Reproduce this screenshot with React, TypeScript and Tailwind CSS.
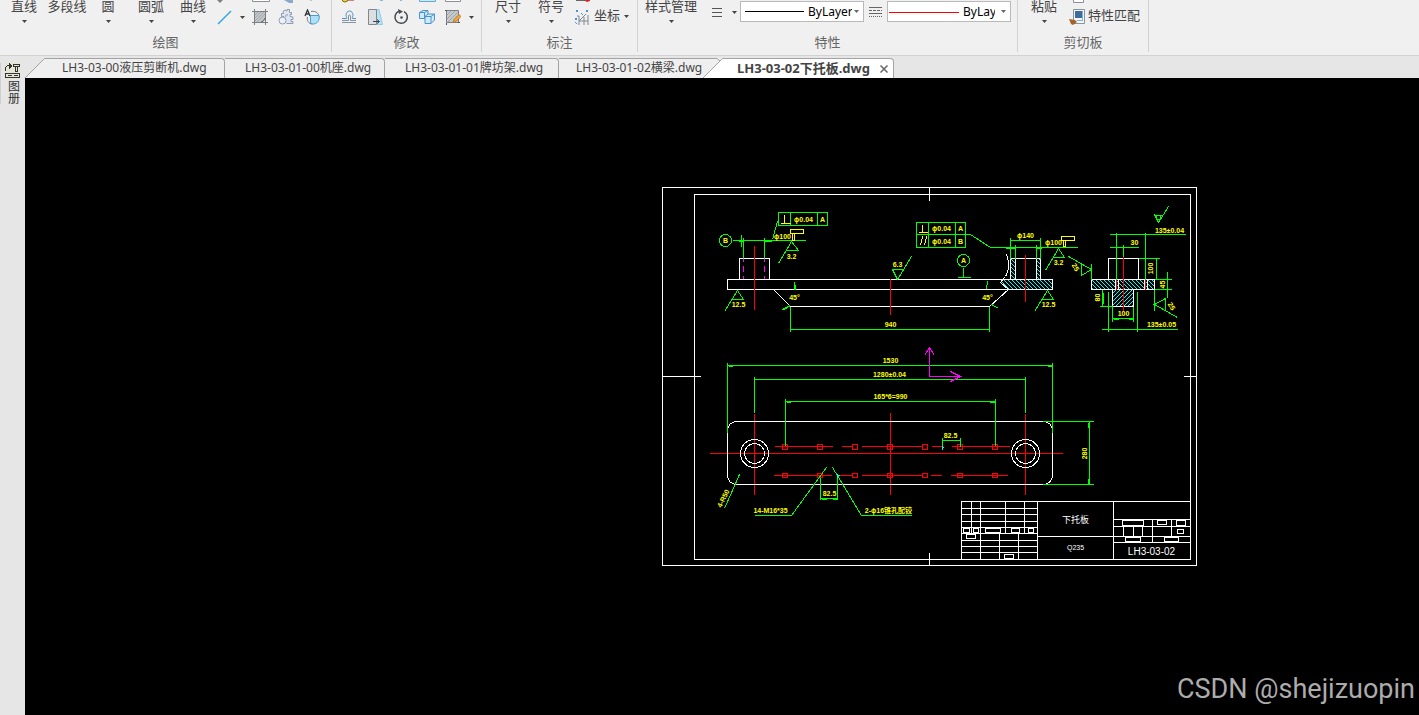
import type { ReactNode } from 'react'
import { clsx } from 'clsx'

// --- Icons ---

const Caret = ({ className }: { className?: string }) => (
  <svg width="5" height="3" viewBox="0 0 5 3" className={clsx('shrink-0', className)} aria-hidden="true">
    <path d="M0 0h5L2.5 3z" fill="currentColor" />
  </svg>
)

const Icon = ({ children }: { children: ReactNode }) => (
  <svg width="16" height="16" viewBox="0 0 16 16" fill="none" stroke="#7d8792" className="shrink-0" aria-hidden="true">
    {children}
  </svg>
)

const LineIcon = () => (
  <Icon>
    <path d="M2 15 15 2" stroke="#2ea3dc" strokeWidth="1.4" />
  </Icon>
)

const HatchIcon = () => (
  <Icon>
    <path d="M2.5 2.5h11v6l-4 5h-7z" fill="#c3c7ca" />
    <path d="M3 6l3-3M3 9l6-6M3 12l9-9M5 13l8-8" stroke="#a5a9ad" />
    <path d="M2.5 0v16M0 2.5h16M13.5 0v16M0 13.5h16" stroke="#7b7f84" />
    <path d="M13 9c0 2-2 4-4 4" stroke="#5d6266" />
  </Icon>
)

const GearIcon = () => (
  <Icon>
    <path
      d="M3.5 7.5V4.5h2L5 2.500 7 1l2 1V.5h2.500v3h2v2h-1.500v2l3 .5v2.500h-2v2h2v2H8.500"
      fill="#dfe5ee"
      stroke="#8d9cb4"
    />
    <path d="M3.5 7.5h2.500M10 6c-2-1-3 1-2 2" stroke="#8d9cb4" />
    <circle cx="4.5" cy="11.5" r="3.5" fill="#eef1f5" stroke="#8d9cb4" />
  </Icon>
)

const BoundaryIcon = () => (
  <Icon>
    <path d="M7 2.5c5-1 8 2 8 6M3.5 8c-1 3 1 7 5 7" stroke="#6f7880" />
    <path d="M6.500 6.500H15c1 5-2 8.500-6 8.500-2 0-2.500-1-2.500-3z" fill="#aee0fa" stroke="#4b9ed0" />
    <path d="M1 7 3.500 1 6 7M2 5h3" stroke="#2f3438" strokeWidth="1.3" />
  </Icon>
)

const OffsetIcon = () => (
  <Icon>
    <path d="M1 9.500h4.500c1 0 0-1-.5-3 0-6 7-6 7 0-.5 2-1.500 3 0 3H15" stroke="#4a93c8" />
    <path d="M1 13.500h14M1 11.500h6.500V7c0-1.500 2-1.500 2 0v4.500H15" stroke="#8795a3" />
  </Icon>
)

const StretchIcon = () => (
  <Icon>
    <path d="M8 .5h4l3.500 15H8z" fill="#b6e2f8" stroke="#8fcbea" />
    <path d="M1.500 .5h8v15h-8z" fill="#dcdfe1" stroke="#80868c" />
    <path d="M6 12.500h6M10 10.500l2.500 2-2.500 2" stroke="#3b4045" />
  </Icon>
)

const RotateIcon = () => (
  <Icon>
    <path d="M6 2.300A6.200 6.200 0 1 0 11 2.600" stroke="#474c51" strokeWidth="1.5" />
    <path d="M5 0l5 2.500L6 5z" fill="#474c51" stroke="none" />
    <circle cx="8.5" cy="8.5" r="1.300" fill="#474c51" stroke="none" />
  </Icon>
)

const BlocksIcon = () => (
  <Icon>
    <path d="M.5 3.500 4 1.500h5v6l-3 2H.5zM.5 3.500h5v6M5.500 3.500l3.500-2" fill="#cfeafb" stroke="#4a93c8" />
    <path d="M6 7.500 9 5h6.500v6L12 14.500H6zM6 7.500h6v7M12 7.500 15.500 5" fill="#cfeafb" stroke="#4a93c8" />
  </Icon>
)

const EditHatchIcon = () => (
  <Icon>
    <path d="M1.500 1.500h12v12h-12z" fill="#c6c9cc" stroke="#7b7f84" />
    <path d="M2 6l4-4M2 10l8-8M3 13 13 3" stroke="#a1a5a9" />
    <path d="M14 5.500 9 10.500l-1 3 3-1 5-5z" fill="#f0a742" stroke="#b97b22" />
    <path d="M0 1.500h2M13 13.500h2M1.500 14v2" stroke="#4e5358" />
  </Icon>
)

const OrdinateIcon = () => (
  <Icon>
    <path d="M3 7h2v9M5 12h9M5 12l7-7M10 8v8M14 6v10" stroke="#7f8890" />
    <path d="M2 1l2 2M4 1 2 3M12 1l2 2M14 1l-2 2M1 9l2 2M3 9l-2 2M1 13l2 2M7 4l2 2" stroke="#4a93d8" />
  </Icon>
)

const MatchIcon = () => (
  <Icon>
    <path d="M4.500 .5h11v14h-11z" fill="#f4f6f8" stroke="#8b939a" />
    <path d="M6 2h7v7H6z" fill="#3f6c9f" stroke="none" />
    <path d="M13.500 2v9M8 11.500h6" stroke="#7fb0dc" />
    <path d="M0 10l6 1 2 2-4 3-2-1z" fill="#a7622b" stroke="none" />
  </Icon>
)

// --- Ribbon ---

interface RibbonPanelProps {
  title: string
  className: string
  children: ReactNode
}

const RibbonPanel = ({ title, className, children }: RibbonPanelProps) => (
  <section className={clsx('flex h-[52px] shrink-0 flex-col border-r border-[#d2d2d2]', className)}>
    <div className="flex h-8 items-start">{children}</div>
    <h2 className="text-center text-[13px] leading-5 text-[#666]">{title}</h2>
  </section>
)

interface BigButtonProps {
  label: string
  className: string
  menu?: boolean
}

const BigButton = ({ label, className, menu = true }: BigButtonProps) => (
  <button className={clsx('flex shrink-0 flex-col items-center gap-2 whitespace-nowrap', className)}>
    <span className="text-[13px] leading-3">{label}</span>
    {menu && <Caret />}
  </button>
)

const IconButton = ({ label, children }: { label: string; children: ReactNode }) => (
  <button aria-label={label} className="flex size-4 shrink-0">
    {children}
  </button>
)

const MenuButton = ({ label, className }: { label: string; className: string }) => (
  <button aria-label={label} className={clsx('flex h-4 items-center justify-center', className)}>
    <Caret />
  </button>
)

// lower edges of the tool row that is scrolled out above the window
const ClippedTools = ({ children }: { children?: ReactNode }) => (
  <svg height="4" className="mb-[5px] w-full shrink-0" aria-hidden="true">
    {children}
  </svg>
)

interface LayerSelectProps {
  label: string
  color: string
  lineClass: string
  selectClass: string
}

const LayerSelect = ({ label, color, lineClass, selectClass }: LayerSelectProps) => (
  <div className="mt-px flex h-[21px] w-[124px] shrink-0 items-center border border-[#b9b9b9] bg-white text-black">
    <svg height="1" className={clsx('shrink-0', lineClass)} aria-hidden="true">
      <rect width="100%" height="1" fill={color} />
    </svg>
    <select
      aria-label={label}
      className={clsx('ml-1 shrink-0 appearance-none overflow-hidden bg-transparent text-[12px] leading-4', selectClass)}
    >
      <option>ByLayer</option>
    </select>
    <Caret className="mr-1 ml-auto text-[#666]" />
  </div>
)

const Ribbon = () => (
  <header className="flex h-14 overflow-hidden border-b border-[#d2d2d2] bg-[#f0f0f0]">
    <RibbonPanel title="绘图" className="w-[332px]">
      <BigButton label="直线" className="w-12" />
      <BigButton label="多段线" className="w-[38px]" menu={false} />
      <BigButton label="圆" className="w-11" />
      <BigButton label="圆弧" className="w-[42px]" />
      <BigButton label="曲线" className="w-[42px]" />
      <div className="flex flex-1 flex-col">
        <ClippedTools>
          <path d="M3 0l3 3 3-3z" fill="#7d8186" />
          <path d="M38.5 0v1.5h17V0" fill="#fff" stroke="#8b9096" />
          <path d="M70 0h9v3h-4z" fill="#8ea7cc" />
          <path d="M97 0v1" stroke="#999" />
        </ClippedTools>
        <div className="flex pl-[2px]">
          <IconButton label="构造线"><LineIcon /></IconButton>
          <MenuButton label="构造线选项" className="w-5" />
          <div className="flex gap-[10px]">
            <IconButton label="填充"><HatchIcon /></IconButton>
            <IconButton label="齿轮"><GearIcon /></IconButton>
            <IconButton label="边界"><BoundaryIcon /></IconButton>
          </div>
        </div>
      </div>
    </RibbonPanel>

    <RibbonPanel title="修改" className="w-[150px]">
      <div className="flex flex-1 flex-col">
        <ClippedTools>
          <circle cx="13" cy="-1" r="3" fill="#f2cf1d" stroke="#7d6d1d" />
          <path d="M16 0h6v1h-6z" fill="#c98480" />
          <path d="M48 0h3v1h-3zM68 0h2v1h-2z" fill="#8fb4d4" />
          <path d="M87.5 0v1.5h16V0" fill="#cbe9fb" stroke="#62a8d8" />
          <path d="M113.5 0v1.5h15V0" fill="#fff" stroke="#8b9096" />
        </ClippedTools>
        <div className="flex pl-[9px]">
          <div className="flex gap-[10px]">
            <IconButton label="偏移"><OffsetIcon /></IconButton>
            <IconButton label="拉伸"><StretchIcon /></IconButton>
            <IconButton label="旋转"><RotateIcon /></IconButton>
            <IconButton label="阵列"><BlocksIcon /></IconButton>
            <IconButton label="编辑填充"><EditHatchIcon /></IconButton>
          </div>
          <MenuButton label="编辑填充选项" className="w-5" />
        </div>
      </div>
    </RibbonPanel>

    <RibbonPanel title="标注" className="w-[156px]">
      <BigButton label="尺寸" className="ml-1 w-11" />
      <BigButton label="符号" className="w-[42px]" />
      <div className="flex flex-1 flex-col pl-[2px]">
        <ClippedTools>
          <path d="M2 .5h11" stroke="#666" />
          <path d="M10 0h6v1l-3 1z" fill="#d22" />
        </ClippedTools>
        <button className="flex items-start gap-1 whitespace-nowrap text-[13px]">
          <OrdinateIcon />
          <span className="leading-3">坐标</span>
          <Caret className="mt-[6px]" />
        </button>
      </div>
    </RibbonPanel>

    <RibbonPanel title="特性" className="w-[380px]">
      <BigButton label="样式管理" className="w-[66px]" />
      <button aria-label="线宽" className="ml-2 flex h-6 items-center gap-[10px]">
        <svg width="10" height="9" viewBox="0 0 10 9" aria-hidden="true">
          <path d="M0 .5h10M0 4.5h10M0 8.5h10" stroke="#555" />
        </svg>
        <Caret />
      </button>
      <div className="ml-[3px] flex gap-[5px]">
        <LayerSelect label="线宽" color="#000" lineClass="ml-1 w-[59px]" selectClass="w-11" />
        <svg width="13" height="24" viewBox="0 0 13 24" className="shrink-0" aria-hidden="true">
          <path d="M0 7.5h13M0 13.5h13" stroke="#666" />
          <path d="M0 10.5h13" stroke="#666" strokeDasharray="3 1" />
          <path d="M0 16.5h13" stroke="#666" strokeDasharray="1 1" />
        </svg>
        <LayerSelect label="线型" color="#f00" lineClass="mt-[2px] ml-px w-[70px]" selectClass="w-8" />
      </div>
    </RibbonPanel>

    <RibbonPanel title="剪切板" className="w-[131px]">
      <BigButton label="粘贴" className="ml-1 w-11" />
      <div className="flex flex-1 flex-col pl-[3px]">
        <ClippedTools>
          <path d="M4.5 0v2.500h10V0" fill="#fff" stroke="#8b9096" />
        </ClippedTools>
        <button className="flex items-start gap-[3px] whitespace-nowrap text-[13px]">
          <MatchIcon />
          <span className="leading-3">特性匹配</span>
        </button>
      </div>
    </RibbonPanel>
  </header>
)

// --- Document Tabs ---

const TabSlope = ({ left, right }: { left: string; right: string }) => (
  <svg width="20" height="20" viewBox="0 0 20 20" className="shrink-0" aria-hidden="true">
    <path d="M0 0h20L0 20z" fill={left} />
    <path d="M0 20 20 0v20z" fill={right} />
    {left !== '#e6e6e6' && <path d="M0 .5h14L17 3" fill="none" stroke="#a3a3a3" />}
    <path d="M0 20 19.500.5H20" fill="none" stroke="#a3a3a3" />
  </svg>
)

const tabs = [
  { name: 'LH3-03-00液压剪断机.dwg', className: 'w-[180px] rounded-tr-sm border-r pl-[17px]' },
  { name: 'LH3-03-01-00机座.dwg', className: 'w-40 rounded-tr-sm border-r pl-5' },
  { name: 'LH3-03-01-01牌坊架.dwg', className: 'w-[174px] rounded-tr-sm border-r pl-5' },
  { name: 'LH3-03-01-02横梁.dwg', className: 'w-36 pl-[17px]' },
]

const DocumentTabs = () => (
  <nav className="flex h-[22px] items-end overflow-hidden bg-[#e6e6e6] text-[12px] leading-4">
    <TabSlope left="#e6e6e6" right="#efefef" />
    {tabs.map((tab) => (
      <button
        key={tab.name}
        className={clsx(
          'h-5 shrink-0 border-t border-[#a3a3a3] bg-[#efefef] pb-[2px] text-left whitespace-nowrap',
          tab.className,
        )}
      >
        {tab.name}
      </button>
    ))}
    <TabSlope left="#efefef" right="#ffffff" />
    <div className="flex h-5 w-[171px] shrink-0 items-center justify-between rounded-tr-sm border-t border-r border-[#a3a3a3] bg-white pr-[5px] pl-[14px]">
      <button className="pb-[2px] text-[13px] leading-4 font-bold whitespace-nowrap">LH3-03-02下托板.dwg</button>
      <button aria-label="关闭">
        <svg width="8" height="8" viewBox="0 0 8 8" aria-hidden="true">
          <path d="M.5.5l7 7M7.5.5l-7 7" stroke="#666" strokeWidth="1.5" />
        </svg>
      </button>
    </div>
  </nav>
)

// --- Drawing ---

const GREEN = '#00ff00'
const YELLOW = '#ffff00'
const RED = '#ff0000'

interface LabelProps {
  x: number
  y: number
  children: string
  rotate?: number
  size?: number
  fill?: string
}

// x is the middle of the text, y its baseline
const Label = ({ x, y, children, rotate = 0, size = 7, fill = YELLOW }: LabelProps) => (
  <text x={x} y={y} fontSize={size} fill={fill} textAnchor="middle" transform={`rotate(${rotate} ${x} ${y})`}>
    {children}
  </text>
)

const holes = [785, 820, 855, 890, 925, 960, 995]

// [x, y, width, height] of the empty fields in the title block
const fields = [
  [963, 528, 6, 4], [973, 528, 5, 4], [985, 528, 15, 4], [1011, 528, 8, 4], [1028, 528, 5, 4],
  [966, 534, 9, 4], [1004, 554, 9, 4], [1122, 520, 21, 5], [1157, 520, 9, 4], [1176, 520, 9, 5],
  [1177, 529, 6, 4], [1125, 537, 15, 4], [1164, 537, 14, 4],
]

const Sheet = () => (
  <g stroke="#fff">
    <path d="M662 187H1196V565H662zM694 194H1190V559H694z" />
    <path d="M929 187V200M929 552V565M662 376H700M1183 376H1196" />
  </g>
)

const TitleBlock = () => (
  <g stroke="#fff">
    <path d="M961 559V501H1190M1037 501V559M1113 501V559" />
    <path d="M961 508H1037M961 514H1037M961 521H1037M961 527H1037M961 533H1037M961 540H1037M961 546H1037M961 552H1037" />
    <path d="M971 501V533M980 501V559M1005 501V533M1024 501V533M999 533V559M1018 533V559" />
    <path d="M1037 536H1190M1113 519H1190M1113 526H1190M1113 542H1190" />
    <path d="M1152 519V542M1171 519V536M1123 526V536M1133 526V536M1142 526V536" />
    {fields.map(([x, y, w, h]) => (
      <rect key={`${x}-${y}`} x={x} y={y} width={w} height={h} fill="#000" />
    ))}
  </g>
)

const FrontView = () => (
  <>
    {/* section hatching */}
    <path d="M1002 279H1052V289H1008L1000 282zM1010 258h5v21h-5zM1036 258h4v21h-4z" fill="url(#hatch)" />

    <g stroke="#fff">
      <path d="M739 279V258H769V279M1052 279H727V289H1052V279" />
      <path d="M774 290 790 306H989L1008 289" />
      <path d="M1006 254C1009 262 1009 270 1005 276L1000 282 1008 289" />
      <path d="M1010 279V258H1040V279M1015 258V279M1036 258V279" />
    </g>

    <g stroke={GREEN}>
      <path d="M732 240H805M741 234V246M743 237V258M764 237V258M738 241H743M764 241H771" />
      <path d="M743 258V279M764 258V279" stroke="#ff00ff" strokeDasharray="3 4 6 4" />
      <circle cx="725" cy="240" r="6" />
      <path d="M778 212H827V225H778zM790 212V225M817 212V225M777 221 772 239" />
      <path d="M778 263 791 241 798 250H785" />
      <path d="M724 311 737 290 743 299H731" />
      <path d="M794 281V289M795 284V289M782 309 790 305M784 309 788 306" />
      <path d="M790 306V331M989 306V331M790 329H989" />
      <path d="M911 256 897 279 892 269H903" />
      <path d="M916 222H965V247H916zM928 222V247M955 222V247M916 234H970L990 247H1077" />
      <circle cx="963" cy="260" r="6" />
      <path d="M963 267V277M957 277H970" />
      <path d="M1010 237V258M1040 237V258M1010 240H1040M1015 244V258M1036 244V258M1005 248H1015M1036 248H1041" />
      <path d="M1045 270 1058 248 1064 257H1052" />
      <path d="M1034 311 1047 290 1053 299H1041" />
      <path d="M987 281 986 289M991 304 998 308" />
    </g>

    <g stroke={YELLOW}>
      <path d="M784 214V223M780 223H790M922 224V232M918 232H927M920 245 922 236M924 245 926 236" />
      <path d="M790 229h13v4h-13zM792 233h2v7h-2zM1061 236h13v4h-13zM1063 240h2v6h-2z" />
    </g>

    <path d="M754 245V309M890 278V314M1025 254V301" stroke={RED} />
  </>
)

const SideView = () => (
  <>
    <path d="M1091 279H1154V289H1091z" fill="url(#hatch)" stroke="#fff" />
    <path d="M1112 289H1133V306H1112z" fill="url(#hatch-back)" stroke="#fff" />
    <path d="M1108 279V258H1138V279M1115 279V289M1118 279V289M1144 279V289M1147 279V289" stroke="#fff" />

    <g stroke={GREEN}>
      <path d="M1154 214 1158 222 1168 206M1155 215H1162" />
      <circle cx="1158" cy="217" r="2" />
      <path d="M1116 232V279M1145 232V279M1109 234H1185M1109 247H1138M1123 244V258" />
      <path d="M1138 258H1159M1156 258V279M1154 279H1171M1154 289H1171M1167 271V297" />
      <path d="M1068 256 1091 269 1081 275V263M1091 263V279" />
      <path d="M1177 317 1154 304 1165 298V310M1154 289V310" />
      <path d="M1102 289V306M1103 292V303M1099 306H1112" />
      <path d="M1112 306V321M1133 306V321M1112 318H1133M1113 319H1118M1128 319H1132" />
      <path d="M1108 291V331M1137 291V331M1101 329H1177" />
    </g>

    <path d="M1116 279V289M1123 256V310M1145 279V289" stroke={RED} />
  </>
)

const PlanView = () => (
  <>
    <g stroke={RED}>
      <path d="M709 453H1062M754 413V494M890 412V494M1025 413V494" />
      <path d="M774 446H832M841 446H852M861 446H921M931 446H941M951 446H1009" />
      <path d="M773 475H831M839 475H851M861 475H921M930 475H941M950 475H1007" />
      {holes.map((x) => (
        <path key={x} d={`M${x - 3} 444h5v5h-5zM${x - 3} 473h5v4h-5z`} />
      ))}
    </g>

    <g stroke="#fff">
      <rect x="727" y="421" width="325" height="63" rx="9" />
      <circle cx="754" cy="453" r="14" />
      <circle cx="754" cy="453" r="10" />
      <circle cx="1025" cy="453" r="14" />
      <circle cx="1025" cy="453" r="10" />
    </g>

    <g stroke={GREEN}>
      <path d="M727 362V432M1052 362V432M727 365H1052M728 366H732M1047 366H1052" />
      <path d="M754 376V412M1025 376V412M754 379H1025" />
      <path d="M785 398V445M995 398V445M785 401H995M786 402H790M989 402H995" />
      <path d="M942 437V446M960 437V446M942 440H960" />
      <path d="M820 477V499M837 477V499M820 498H837M821 499H826M832 499H837" />
      <path d="M826 467 791 515H754M832 467 861 515H911M724 508 739 474" />
      <path d="M1042 421H1093M1042 484H1093M1089 421V484M1088 422V427M1088 478V484" />
    </g>

    <path d="M836 475h3M837 473v4M941 447h2M942 445v4" stroke="#00ffff" />
    <path d="M929 376V347M924 355 929 347 934 355M929 376H960M950 371 960 376 950 381" stroke="#ff00ff" />
  </>
)

const Drawing = () => (
  <svg
    viewBox="24.5 77.5 1394 637"
    fill="none"
    shapeRendering="crispEdges"
    className="block h-auto w-full font-['Liberation_Sans','Noto_Sans_CJK_SC',sans-serif] font-bold"
    role="img"
    aria-label="LH3-03-02 下托板"
  >
    <defs>
      <pattern id="hatch" x=".5" y=".5" width="4" height="4" patternUnits="userSpaceOnUse">
        <path d="M0 0h1v1H0zM1 1h1v1H1zM2 2h1v1H2zM3 3h1v1H3z" fill="#00ffff" />
      </pattern>
      <pattern id="hatch-back" x=".5" y=".5" width="4" height="4" patternUnits="userSpaceOnUse">
        <path d="M3 0h1v1H3zM2 1h1v1H2zM1 2h1v1H1zM0 3h1v1H0z" fill="#00ffff" />
      </pattern>
    </defs>

    <Sheet />
    <TitleBlock />
    <FrontView />
    <SideView />
    <PlanView />

    <Label x={725} y={242}>B</Label>
    <Label x={803} y={221}>ϕ0.04</Label>
    <Label x={822} y={221}>A</Label>
    <Label x={782} y={238}>ϕ100</Label>
    <Label x={791} y={258}>3.2</Label>
    <Label x={738} y={306}>12.5</Label>
    <Label x={794} y={299}>45°</Label>
    <Label x={890} y={326}>940</Label>
    <Label x={897} y={266}>6.3</Label>
    <Label x={941} y={230}>ϕ0.04</Label>
    <Label x={960} y={230}>A</Label>
    <Label x={941} y={243}>ϕ0.04</Label>
    <Label x={960} y={243}>B</Label>
    <Label x={963} y={262}>A</Label>
    <Label x={987} y={299}>45°</Label>
    <Label x={1025} y={237}>ϕ140</Label>
    <Label x={1053} y={244}>ϕ100</Label>
    <Label x={1058} y={264}>3.2</Label>
    <Label x={1048} y={306}>12.5</Label>

    <Label x={1169} y={232}>135±0.04</Label>
    <Label x={1134} y={244}>30</Label>
    <Label x={1152} y={268} rotate={-90}>100</Label>
    <Label x={1164} y={284} rotate={-90}>45</Label>
    <Label x={1073} y={268} rotate={60}>25</Label>
    <Label x={1169} y={307} rotate={60}>25</Label>
    <Label x={1099} y={297} rotate={-90}>80</Label>
    <Label x={1123} y={315}>100</Label>
    <Label x={1161} y={326}>135±0.05</Label>

    <Label x={890} y={362}>1530</Label>
    <Label x={889} y={376}>1280±0.04</Label>
    <Label x={890} y={398}>165*6=990</Label>
    <Label x={950} y={437}>82.5</Label>
    <Label x={829} y={495}>82.5</Label>
    <Label x={1086} y={453} rotate={-90}>280</Label>
    <Label x={725} y={499} rotate={-64}>4-R50</Label>
    <Label x={770} y={512}>14-M16*35</Label>
    <Label x={888} y={512}>2-ϕ16锥孔配铰</Label>

    <g className="font-normal">
      <Label x={1075} y={522} size={9} fill="#fff">下托板</Label>
      <Label x={1075} y={549} fill="#fff">Q235</Label>
      <Label x={1151} y={554} size={10} fill="#fff">LH3-03-02</Label>
    </g>
  </svg>
)

// --- App ---

const SideDock = () => (
  <aside className="w-[25px] shrink-0 bg-[#e6e6e6] pt-[7px]">
    <button className="flex flex-col items-center border-l border-[#cfcfcf] pl-1 text-[#333]">
      <svg width="15" height="16" viewBox="0 0 15 16" fill="none" stroke="#333" shapeRendering="crispEdges" aria-hidden="true">
        <path d="M0 0h15v16H0z" fill="#e6e6d2" stroke="none" />
        <path d="M.5 8V4.500L2.500 2.500H4" />
        <path d="M4 0v6l3-3z" fill="#333" stroke="none" />
        <path d="M8.500 1.500h6v2h-6zM10.500 4v4h2V4" />
        <path d="M.5 10.500h14v4H.5zM3 12.500h4M9 12.500h4" />
      </svg>
      <span className="mt-px text-[12px] leading-none [writing-mode:vertical-rl]">图册</span>
    </button>
  </aside>
)

const App = () => (
  <div className="flex min-h-screen flex-col bg-black font-['Noto_Sans','Noto_Sans_CJK_SC',sans-serif] text-[#444]">
    <Ribbon />
    <div className="flex flex-1">
      <SideDock />
      <div className="flex min-w-0 flex-1 flex-col">
        <DocumentTabs />
        <main className="relative flex-1 bg-black">
          <Drawing />
          <p className="absolute right-1 bottom-2 font-['Roboto',sans-serif] text-[27px] leading-9 text-[#acacac]">
            CSDN @shejizuopin
          </p>
        </main>
      </div>
    </div>
  </div>
)

export default App
